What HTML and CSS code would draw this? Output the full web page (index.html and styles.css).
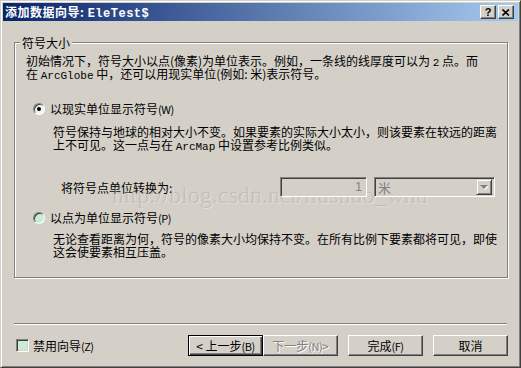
FILE: index.html
```html
<!DOCTYPE html>
<html lang="zh-CN">
<head>
    <meta charset="UTF-8">
    <title>添加数据向导</title>
    <link rel="stylesheet" href="styles.css">
</head>
<body>
    <div class="window">
        <div class="titlebar">
            <span class="title">添加数据向导: <span class="en-bold">EleTest$</span></span>
            <span class="cbtn help">?</span>
            <span class="cbtn close">
                <svg width="8" height="7" viewBox="0 0 8 7">
                    <path d="M0.5 0.5 L7 6.5 M7 0.5 L0.5 6.5" stroke="#000" stroke-width="1.6" fill="none"/>
                </svg>
            </span>
        </div>

        <div class="content">
            <fieldset class="group">
                <legend>符号大小</legend>
                <p class="intro">初始情况下，符号大小以点(像素)为单位表示。例如，一条线的线厚度可以为 <span class="en">2</span> 点。而<br>在 <span class="en">ArcGlobe</span> 中，还可以用现实单位(例如: 米)表示符号。</p>

                <div class="option first">
                    <span class="radio checked"></span>
                    <span>以现实单位显示符号<span class="key">(W)</span></span>
                </div>
                <p class="desc">符号保持与地球的相对大小不变。如果要素的实际大小太小，则该要素在较远的距离<br>上不可见。这一点与在 <span class="en">ArcMap</span> 中设置参考比例类似。</p>

                <div class="convert">
                    <span class="convert-label">将符号点单位转换为:</span>
                    <span class="numbox">1</span>
                    <span class="combo">
                        <span class="combo-text">米</span>
                        <span class="drop"><span class="arrow"></span></span>
                    </span>
                </div>

                <div class="option second">
                    <span class="radio"></span>
                    <span>以点为单位显示符号<span class="key">(P)</span></span>
                </div>
                <p class="desc desc-last">无论查看距离为何，符号的像素大小均保持不变。在所有比例下要素都将可见，即使<br>这会使要素相互压盖。</p>
            </fieldset>

            <div class="separator"></div>

            <div class="footer">
                <span class="checkbox"></span>
                <span class="check-label">禁用向导<span class="key">(Z)</span></span>
                <span class="spacer"></span>
                <span class="btn default">&lt; 上一步<span class="key">(B)</span></span>
                <span class="btn disabled">下一步<span class="key">(N)</span> &gt;</span>
                <span class="btn gap">完成<span class="key">(F)</span></span>
                <span class="btn gap">取消</span>
            </div>
        </div>

        <div class="watermark">http://blog.csdn.net/liushuo_whu</div>
    </div>
</body>
</html>
```

FILE: styles.css
```css
body {
    margin: 0;
    background-color: #d4d0c8;
    font-family: "Noto Sans CJK SC", sans-serif;
    font-size: 12px;
    line-height: 13px;
    color: #000;
}

.window {
    position: relative;
    width: 521px;
    height: 368px;
    box-sizing: border-box;
    padding: 2px;
    border: 1px solid;
    border-color: #d4d0c8 #404040 #404040 #d4d0c8;
    box-shadow: inset 1px 1px 0 #fff, inset -1px -1px 0 #808080;
    overflow: hidden;
}

.titlebar {
    display: flex;
    align-items: center;
    height: 18px;
    padding: 0 4px 0 2px;
    background: linear-gradient(to right, #0a246a, #a6caf0);
}

.title {
    flex: 1;
    color: #fff;
    font-weight: bold;
    line-height: 18px;
    letter-spacing: 0.5px;
}

.en-bold {
    font-family: "Liberation Mono", monospace;
    font-size: 12px;
    line-height: 0;
}

.cbtn {
    display: flex;
    align-items: center;
    justify-content: center;
    width: 16px;
    height: 14px;
    box-sizing: border-box;
    background-color: #d4d0c8;
    border: 1px solid;
    border-color: #fff #404040 #404040 #fff;
    box-shadow: inset -1px -1px 0 #808080;
    font-family: "Liberation Sans", sans-serif;
    font-weight: bold;
    font-size: 11px;
    line-height: 12px;
}

.help {
    margin-right: 2px;
}

.content {
    padding: 15px 10px 0 11px;
}

.group {
    margin: 0;
    padding: 0;
    height: 242px;
    box-sizing: border-box;
    min-width: 0;
    border: 1px solid #808080;
    box-shadow: inset 1px 1px 0 #fff, 1px 1px 0 #fff;
}

.group legend {
    height: 13px;
    margin-left: 5px;
    padding: 0 2px;
    line-height: 13px;
    background-color: #d4d0c8;
}

p {
    margin: 0;
    height: 26px;
    white-space: nowrap;
}

.en {
    font-family: "Liberation Mono", monospace;
    font-size: 11px;
    line-height: 0;
}

.key {
    font-size: 11px;
    letter-spacing: -0.5px;
    line-height: 0;
}

.intro {
    margin: 5px 0 0 11px;
}

.option {
    display: flex;
    align-items: center;
    height: 13px;
    margin-left: 18px;
}

.option.first {
    margin-top: 22px;
}

.option.second {
    margin-top: 14px;
}

.radio {
    position: relative;
    width: 12px;
    height: 12px;
    margin-right: 5px;
    box-sizing: border-box;
    border-radius: 50%;
    border: 1px solid;
    border-color: #808080 #fff #fff #808080;
    box-shadow: inset 1px 1px 0 #404040;
    background-color: #c9ecd2;
}

.radio.checked {
    background-color: #f2f2f2;
}

.radio.checked::after {
    content: "";
    position: absolute;
    left: 3px;
    top: 3px;
    width: 4px;
    height: 4px;
    border-radius: 50%;
    background-color: #000;
}

.desc {
    margin: 10px 0 0 38px;
}

.desc-last {
    margin-top: 8px;
}

.convert {
    display: flex;
    align-items: center;
    height: 20px;
    margin: 26px 0 0 46px;
}

.convert-label {
    width: 219px;
}

.numbox,
.combo {
    position: relative;
    z-index: 2;
    height: 20px;
    box-sizing: border-box;
    border: 1px solid;
    border-color: #808080 #fff #fff #808080;
    box-shadow: inset 1px 1px 0 #404040, inset -1px -1px 0 #d4d0c8;
    background-color: #d4d0c8;
    color: #808080;
}

.numbox {
    width: 87px;
    margin-right: 7px;
    padding-right: 4px;
    text-align: right;
    line-height: 18px;
    font-family: "Liberation Sans", sans-serif;
}

.combo {
    display: flex;
    align-items: center;
    width: 121px;
    padding: 0 2px 0 3px;
}

.combo-text {
    flex: 1;
    font-size: 13px;
}

.drop {
    display: flex;
    align-items: center;
    justify-content: center;
    width: 16px;
    height: 16px;
    box-sizing: border-box;
    border: 1px solid;
    border-color: #d4d0c8 #404040 #404040 #d4d0c8;
    box-shadow: inset 1px 1px 0 #fff, inset -1px -1px 0 #808080;
}

.arrow {
    width: 0;
    height: 0;
    border-left: 4px solid transparent;
    border-right: 4px solid transparent;
    border-top: 4px solid #808080;
    filter: drop-shadow(1px 1px 0 #fff);
}

.separator {
    margin: 45px 1px 0 0;
    border-top: 1px solid #808080;
    border-bottom: 1px solid #fff;
}

.footer {
    display: flex;
    align-items: center;
    height: 21px;
    margin-top: 10px;
}

.checkbox {
    width: 13px;
    height: 13px;
    margin-left: 2px;
    box-sizing: border-box;
    border: 1px solid;
    border-color: #808080 #fff #fff #808080;
    box-shadow: inset 1px 1px 0 #404040, inset -1px -1px 0 #d4d0c8;
    background-color: #c9ecd2;
}

.check-label {
    margin-left: 4px;
}

.spacer {
    flex: 1;
}

.btn {
    display: flex;
    align-items: center;
    justify-content: center;
    width: 75px;
    height: 21px;
    box-sizing: border-box;
    border: 1px solid;
    border-color: #fff #404040 #404040 #fff;
    box-shadow: inset -1px -1px 0 #808080;
    background-color: #d4d0c8;
}

.btn.default {
    border-color: #000;
    box-shadow: inset 1px 1px 0 #fff, inset -1px -1px 0 #404040, inset -2px -2px 0 #808080;
}

.btn.disabled {
    color: #808080;
    text-shadow: 1px 1px 0 #fff;
}

.btn.gap {
    margin-left: 10px;
}

.watermark {
    position: absolute;
    left: 111px;
    top: 182px;
    z-index: 1;
    font-family: "Liberation Serif", serif;
    font-size: 24px;
    line-height: 24px;
    color: rgba(150, 146, 140, 0.3);
    text-shadow: 1px 1px 0 rgba(255, 255, 255, 0.3);
    white-space: nowrap;
    pointer-events: none;
}
```
